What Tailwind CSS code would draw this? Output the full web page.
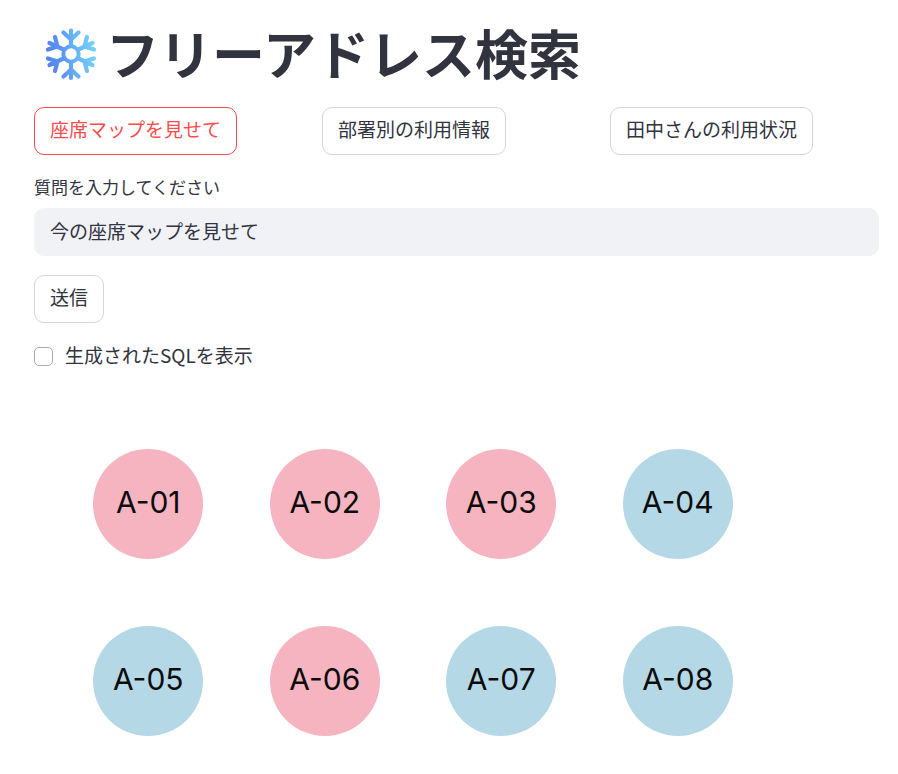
<!DOCTYPE html>
<html lang="ja">
<head>
<meta charset="utf-8">
<meta name="viewport" content="width=device-width, initial-scale=1">
<title>フリーアドレス検索</title>
<script src="https://cdn.jsdelivr.net/npm/@tailwindcss/browser@4"></script>
</head>
<body class="bg-white text-[#31333f] font-['Noto_Sans_CJK_JP',sans-serif] text-[19px] leading-[28px]">
<main class="pt-[20px] pb-[38px] pl-[34px] pr-[19px]">
  <h1 class="flex items-center gap-[8px] pl-[10px] text-[53px] leading-[68px] font-bold">
    <svg class="size-[54px] shrink-0" viewBox="0 0 54 54" fill="none" stroke="url(#ice)" stroke-linecap="round" aria-hidden="true">
      <defs>
        <linearGradient id="ice" gradientUnits="userSpaceOnUse" x1="4" y1="30" x2="50" y2="24">
          <stop offset="0" stop-color="#5384ee"/>
          <stop offset="0.3" stop-color="#5b95f3"/>
          <stop offset="0.6" stop-color="#66b5f7"/>
          <stop offset="1" stop-color="#76cffb"/>
        </linearGradient>
      </defs>
      <g stroke-width="4.2">
        <path d="M27 18V3.500M27 12.500L19.500 5.500M27 12.500L34.500 5.500M27 36V51M27 42.500L19.500 49.500M27 42.500L34.500 49.500"/>
        <path d="M19.500 22.500L5.500 16M13.500 19.500L11 10M13.500 19.500L4 22.500M34.500 22.500L48.500 16M40.500 19.500L43 10M40.500 19.500L50 22.500M19.500 31.500L5.500 38M13.500 34.500L11 44M13.500 34.500L4 31.500M34.500 31.500L48.500 38M40.500 34.500L43 44M40.500 34.500L50 31.500"/>
      </g>
      <circle cx="27" cy="27" r="7.700" stroke-width="4"/>
    </svg>
    <span class="pb-[4px] leading-[64px]">フリーアドレス検索</span>
  </h1>

  <div class="mt-[19px] grid grid-cols-3 gap-[19px]">
    <div><button type="button" class="h-[48px] rounded-[10px] border border-[#ff4b4b] px-[15px] pb-[4px] text-[#ff4b4b] whitespace-nowrap">座席マップを見せて</button></div>
    <div><button type="button" class="h-[48px] rounded-[10px] border border-[#d6d6d9] px-[15px] pb-[4px] whitespace-nowrap">部署別の利用情報</button></div>
    <div><button type="button" class="h-[48px] rounded-[10px] border border-[#d6d6d9] px-[15px] pb-[4px] whitespace-nowrap">田中さんの利用状況</button></div>
  </div>

  <form>
    <label for="question" class="mt-[18px] block pb-[7px] text-[17px]">質問を入力してください</label>
    <input id="question" type="text" value="今の座席マップを見せて" class="block h-[48px] w-full rounded-[10px] bg-[#f0f2f6] px-[16px] pb-[4px] outline-none">
    <button type="button" class="mt-[19px] block h-[48px] rounded-[10px] border border-[#d6d6d9] px-[15px] pb-[4px]">送信</button>
    <div class="mt-[19px] flex items-center gap-[12px]">
      <input id="show-sql" type="checkbox" class="size-[19px] appearance-none rounded-[5px] border border-[#a9aab0] bg-white">
      <label for="show-sql" class="pb-[2px] leading-[26px]">生成されたSQLを表示</label>
    </div>
  </form>

  <ul class="mt-[79px] mr-[113px] ml-[26px] grid grid-cols-4 justify-items-center gap-y-[67px] font-['Inter',sans-serif] text-[30px] leading-[40px] text-[#0c0c0c]">
    <li class="flex size-[110px] items-center justify-center rounded-full bg-[#f6b4c1] pb-[4px]">A-01</li>
    <li class="flex size-[110px] items-center justify-center rounded-full bg-[#f6b4c1] pb-[4px]">A-02</li>
    <li class="flex size-[110px] items-center justify-center rounded-full bg-[#f6b4c1] pb-[4px]">A-03</li>
    <li class="flex size-[110px] items-center justify-center rounded-full bg-[#b4d8e6] pb-[4px]">A-04</li>
    <li class="flex size-[110px] items-center justify-center rounded-full bg-[#b4d8e6] pb-[4px]">A-05</li>
    <li class="flex size-[110px] items-center justify-center rounded-full bg-[#f6b4c1] pb-[4px]">A-06</li>
    <li class="flex size-[110px] items-center justify-center rounded-full bg-[#b4d8e6] pb-[4px]">A-07</li>
    <li class="flex size-[110px] items-center justify-center rounded-full bg-[#b4d8e6] pb-[4px]">A-08</li>
  </ul>
</main>
</body>
</html>
